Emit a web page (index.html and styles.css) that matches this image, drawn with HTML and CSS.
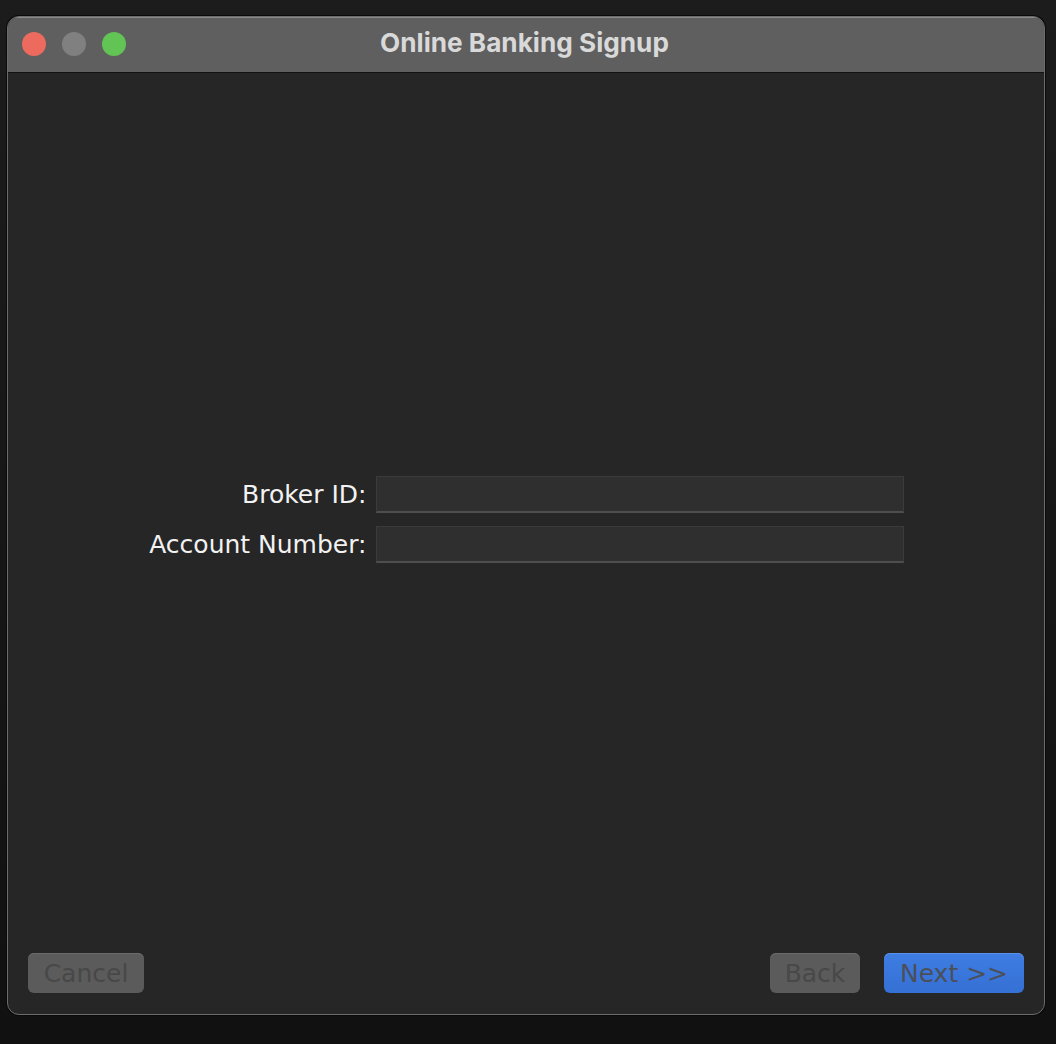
FILE: index.html
```html
<!DOCTYPE html>
<html>
<head>
<meta charset="utf-8">
<link rel="stylesheet" href="styles.css">
</head>
<body>
<div class="window">
  <div class="titlebar">
    <div class="lights">
      <span class="light red"></span>
      <span class="light gray"></span>
      <span class="light green"></span>
    </div>
    <div class="title">Online Banking Signup</div>
  </div>
  <div class="content">
    <div class="form">
      <label class="label">Broker ID:</label>
      <div class="field"></div>
      <label class="label">Account Number:</label>
      <div class="field"></div>
    </div>
  </div>
  <div class="footer">
    <button class="btn cancel">Cancel</button>
    <div class="spacer"></div>
    <button class="btn back">Back</button>
    <button class="btn next">Next &gt;&gt;</button>
  </div>
</div>
</body>
</html>
```
FILE: styles.css
```css
html, body {
  margin: 0;
  padding: 0;
}
body {
  width: 1056px;
  height: 1044px;
  background: linear-gradient(#1c1c1c, #111111);
  padding: 16px 0 0 7px;
  box-sizing: border-box;
  font-family: "DejaVu Sans", "Liberation Sans", sans-serif;
}
.window {
  width: 1038px;
  height: 999px;
  box-sizing: border-box;
  border: 1px solid #6c6c6c;
  border-radius: 12px;
  background: #262626;
  box-shadow: 0 0 0 1px #0a0a0a;
  overflow: hidden;
  display: flex;
  flex-direction: column;
}
.titlebar {
  height: 55px;
  flex: none;
  background: #5f5f5f;
  border-bottom: 1px solid #111;
  position: relative;
  display: flex;
  align-items: center;
  justify-content: center;
  box-shadow: inset 0 1px 0 #8a8a8a;
}
.lights {
  position: absolute;
  left: 14px;
  top: 15px;
  display: flex;
  gap: 16px;
}
.light {
  width: 24px;
  height: 24px;
  border-radius: 50%;
  display: block;
}
.red { background: #ec6a5e; }
.gray { background: #808080; }
.green { background: #61c454; }
.title {
  font-family: Inter, "Liberation Sans", sans-serif;
  font-weight: 700;
  font-size: 26.2px;
  color: #d9d9d9;
  margin-top: -4px;
  margin-left: -3px;
}
.content {
  flex: 1;
  padding-top: 403px;
  display: flex;
  justify-content: center;
}
.form {
  display: grid;
  grid-template-columns: 221px 528px;
  column-gap: 9px;
  row-gap: 13px;
  align-items: center;
  align-self: flex-start;
  margin-left: -3px;
}
.label {
  text-align: right;
  color: #f2f2f2;
  font-size: 25px;
  white-space: nowrap;
}
.field {
  height: 37px;
  box-sizing: border-box;
  background: #2f2f2f;
  border: 1px solid #3b3b3b;
  border-bottom: 2px solid #4e4e4e;
}
.footer {
  flex: none;
  display: flex;
  gap: 24px;
  padding: 0 20px 21px 20px;
}
.spacer { flex: 1; }
.btn {
  height: 40px;
  border: none;
  border-radius: 6px;
  font-family: "DejaVu Sans", "Liberation Sans", sans-serif;
  font-size: 25px;
  color: #484848;
  background: #5b5b5b;
  padding: 0;
  box-shadow: 0 1px 0 #6a6a6a inset;
}
.cancel { width: 116px; }
.back { width: 90px; }
.next {
  width: 140px;
  background: linear-gradient(#3f7de2, #3570d4);
  color: #4b4f5a;
  box-shadow: 0 1px 0 #5a92ea inset;
}
```
